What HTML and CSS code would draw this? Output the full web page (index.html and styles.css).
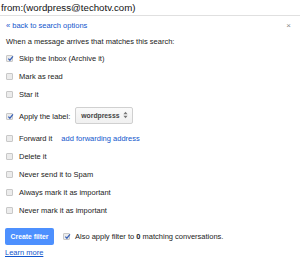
FILE: index.html
```html
<!DOCTYPE html>
<html>
<head>
<meta charset="utf-8">
<link rel="stylesheet" href="styles.css">
</head>
<body>
<div class="search">from:(wordpress@techotv.com)</div>
<div class="panel">
  <div class="toprow">
    <a class="link back">« back to search options</a>
    <span class="close">×</span>
  </div>
  <div class="desc">When a message arrives that matches this search:</div>
  <ul class="opts">
    <li class="opt"><span class="cb on"><svg viewBox="0 0 8 8"><path d="M1.5 4.2 L3.3 6 L6.8 1.6" fill="none" stroke="#3a63b8" stroke-width="1.4"/></svg></span>Skip the Inbox (Archive it)</li>
    <li class="opt"><span class="cb"></span>Mark as read</li>
    <li class="opt"><span class="cb"></span>Star it</li>
    <li class="opt tall"><span class="cb on"><svg viewBox="0 0 8 8"><path d="M1.5 4.2 L3.3 6 L6.8 1.6" fill="none" stroke="#3a63b8" stroke-width="1.4"/></svg></span>Apply the label:<span class="select">wordpresss<svg class="arr" viewBox="0 0 6 9"><path d="M3 0.5 L5.5 3.5 H0.5 Z M3 8.5 L5.5 5.5 H0.5 Z" fill="#777"/></svg></span></li>
    <li class="opt"><span class="cb"></span>Forward it<a class="link fwd">add forwarding address</a></li>
    <li class="opt"><span class="cb"></span>Delete it</li>
    <li class="opt"><span class="cb"></span>Never send it to Spam</li>
    <li class="opt"><span class="cb"></span>Always mark it as important</li>
    <li class="opt"><span class="cb"></span>Never mark it as important</li>
  </ul>
  <div class="actions">
    <span class="btn">Create filter</span>
    <span class="cb on"><svg viewBox="0 0 8 8"><path d="M1.5 4.2 L3.3 6 L6.8 1.6" fill="none" stroke="#3a63b8" stroke-width="1.4"/></svg></span>
    <span class="also">Also apply filter to <b>0</b> matching conversations.</span>
  </div>
  <a class="link learn">Learn more</a>
</div>
</body>
</html>
```
FILE: styles.css
```css
* { box-sizing: border-box; }
html, body { margin: 0; padding: 0; background: #fff; }
body { font-family: "Liberation Sans", Arial, sans-serif; color: #222; width: 300px; height: 263px; overflow: hidden; }
.search {
  height: 16px;
  border-bottom: 1px solid #e0e0e0;
  font-size: 9.7px;
  line-height: 15px;
  padding-left: 1px;
  color: #111;
}
.panel { padding: 0 5px 0 6px; }
.toprow { display: flex; justify-content: space-between; align-items: center; height: 19px; }
.link { color: #15c; text-decoration: none; font-size: 7.5px; }
.close { color: #888; font-size: 8px; margin-right: 4px; }
.desc { font-size: 7.5px; height: 12px; line-height: 12px; margin-top: 1px; }
.opts { list-style: none; margin: 0; padding: 0; margin-top: 1px; }
.opt { display: flex; align-items: center; height: 18px; font-size: 7.5px; }
.opt.tall { height: 26px; }
.cb {
  width: 7px; height: 7px; border: 1px solid #c8c8c8; background: #ececec;
  margin-right: 6px; flex: none; position: relative; border-radius: 1px;
}
.cb svg { position: absolute; left: 0; top: -1px; width: 7px; height: 7px; }
.select {
  display: inline-flex; align-items: center; margin-left: 5px;
  height: 17px; padding: 0 4px 0 5px; border: 1px solid #d0d0d0; border-radius: 2px;
  background: linear-gradient(#fafafa, #f0f0f0); font-size: 6.8px; font-weight: bold; color: #444;
  margin-top: -2px;
}
.arr { width: 5px; height: 8px; margin-left: 4px; }
.fwd { margin-left: 9px; }
.actions { display: flex; align-items: center; margin-top: 9px; height: 17px; }
.btn {
  background: #4d90fe; color: #fff; font-weight: bold; font-size: 6.8px;
  height: 17px; width: 49px; display: flex; align-items: center; justify-content: center;
  border-radius: 2px; margin-left: -1px; margin-right: 9px;
}
.also { font-size: 7.5px; margin-left: -1px; }
.also b { font-weight: bold; }
.learn { display: block; text-decoration: underline; margin-top: 3px; margin-left: -1px; font-size: 7.5px; }
```
